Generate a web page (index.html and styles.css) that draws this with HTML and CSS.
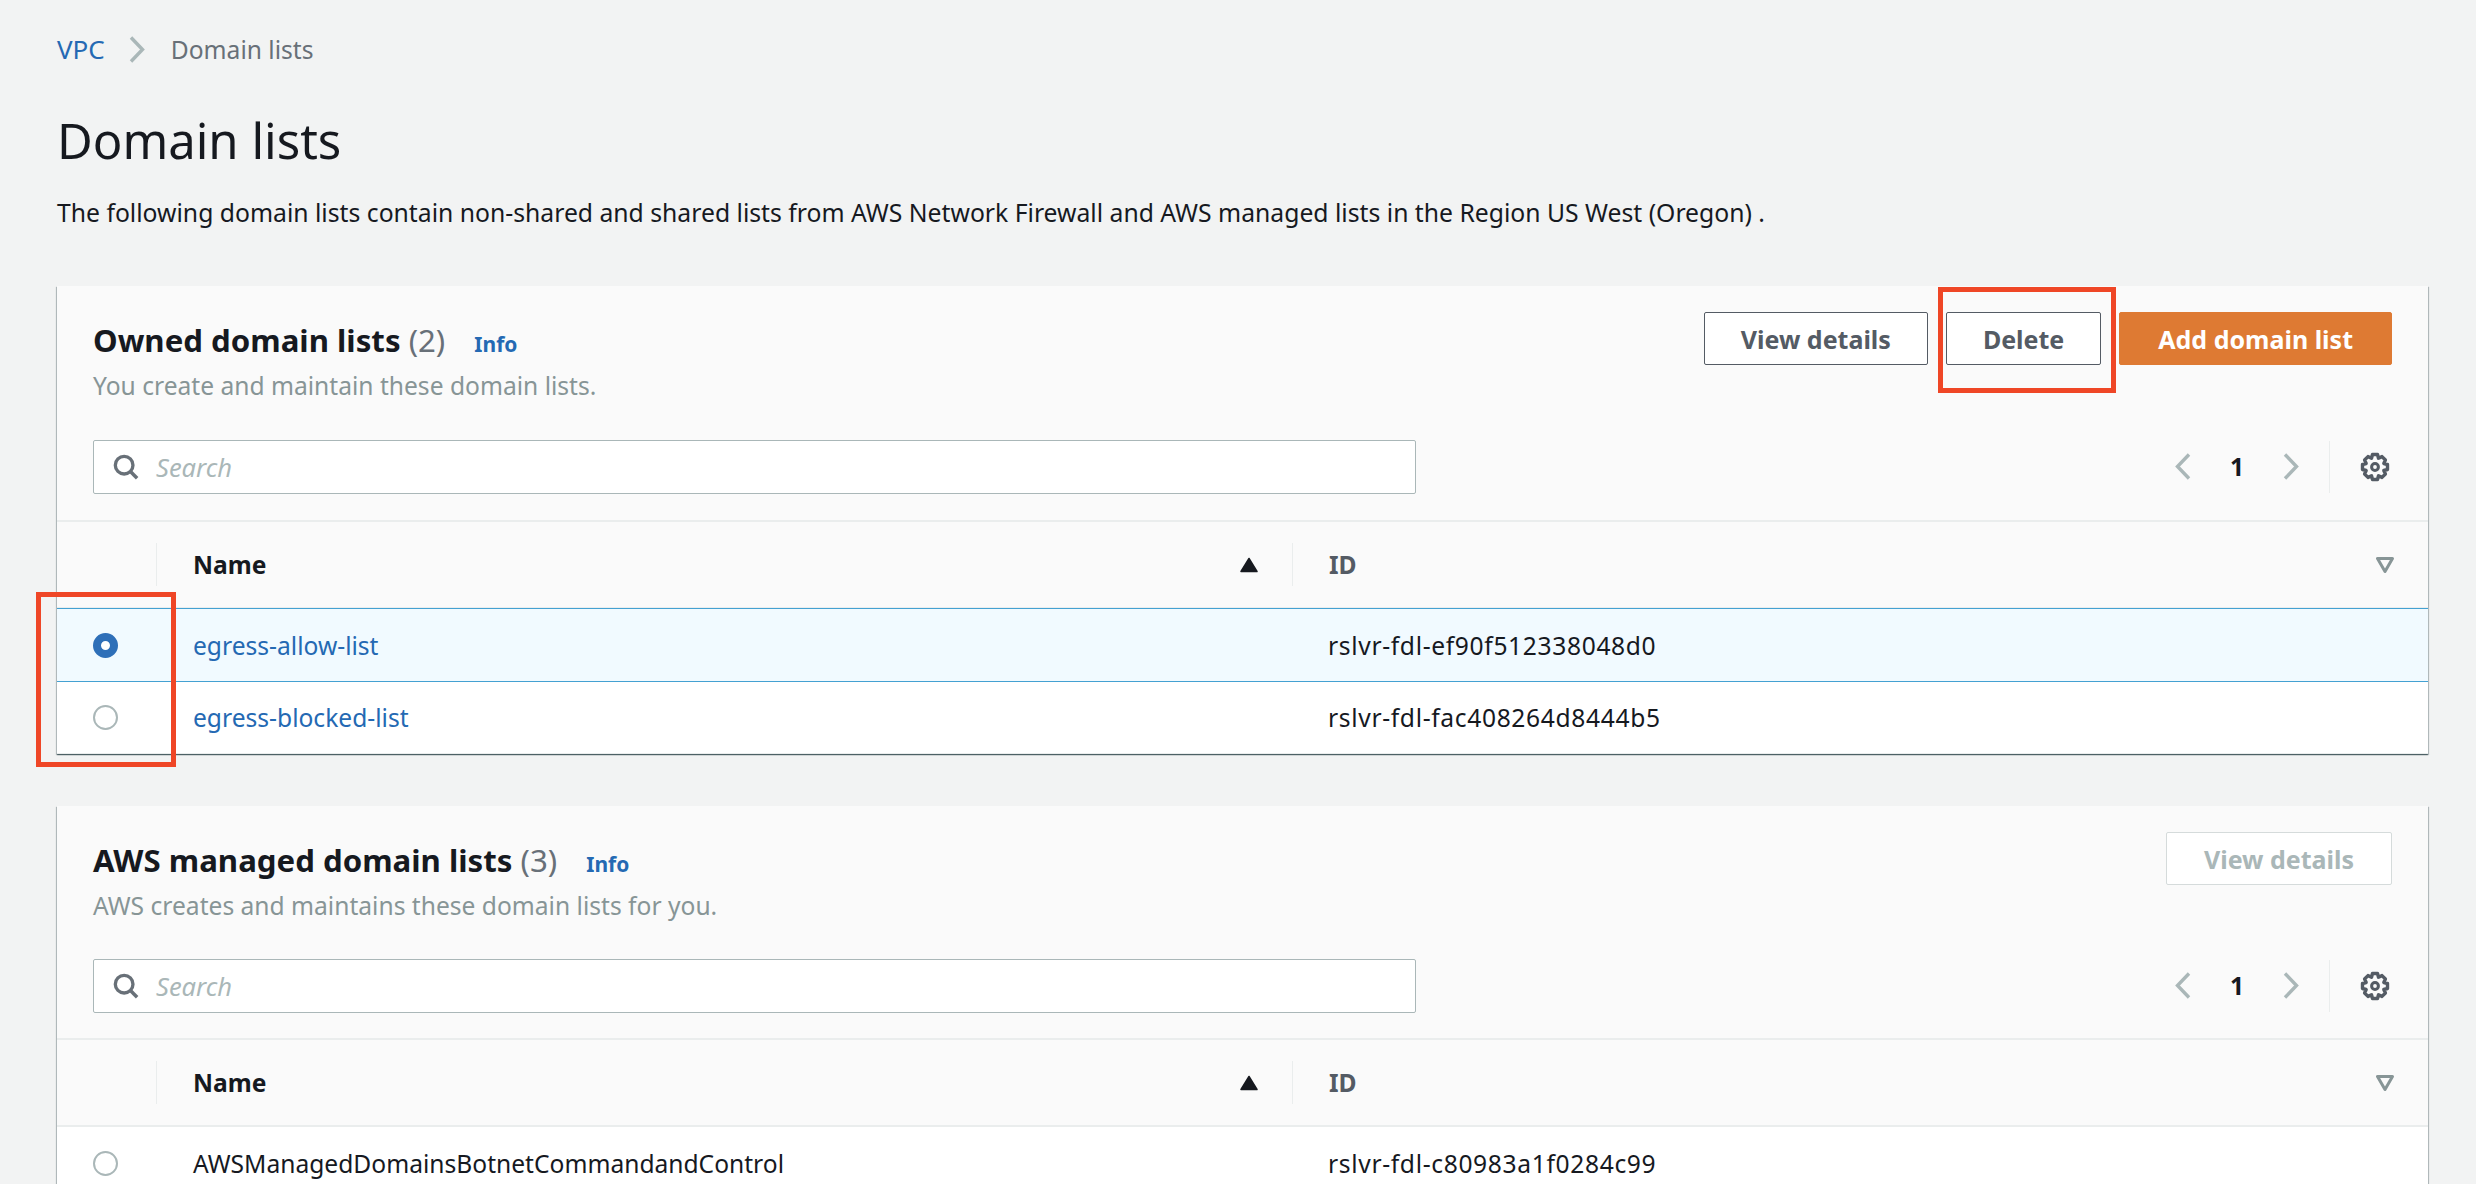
FILE: index.html
```html
<!DOCTYPE html>
<html lang="en">
<head>
    <meta charset="UTF-8">
    <title>Domain lists</title>
    <link rel="stylesheet" href="styles.css">
</head>
<body>
    <svg class="icon-defs" width="0" height="0">
        <symbol id="chevron-right" viewBox="0 0 16 27"><path d="M2 1.5 L13.5 13.5 L2 25.5" fill="none" stroke="currentColor" stroke-width="3.4"/></symbol>
        <symbol id="chevron-left" viewBox="0 0 16 27"><path d="M14 1.5 L2.5 13.5 L14 25.5" fill="none" stroke="currentColor" stroke-width="3.4"/></symbol>
        <symbol id="search" viewBox="0 0 28 28"><circle cx="12" cy="12" r="9.5" fill="none" stroke="currentColor" stroke-width="3.6"/><path d="M18.5 18.5 L26 26" fill="none" stroke="currentColor" stroke-width="3.8"/></symbol>
        <symbol id="gear" viewBox="0 0 30 30"><path d="M12.5 2.5 H17.5 L18.5 6.2 L22 4.6 L25.4 8 L23.8 11.5 L27.5 12.5 V17.5 L23.8 18.5 L25.4 22 L22 25.4 L18.5 23.8 L17.5 27.5 H12.5 L11.5 23.8 L8 25.4 L4.6 22 L6.2 18.5 L2.5 17.5 V12.5 L6.2 11.5 L4.6 8 L8 4.6 L11.5 6.2 Z" fill="none" stroke="currentColor" stroke-width="3.4" stroke-linejoin="round"/><circle cx="15" cy="15" r="3.4" fill="none" stroke="currentColor" stroke-width="3"/></symbol>
        <symbol id="sort-down" viewBox="0 0 18 16"><path d="M1.5 1.5 H16.5 L9 14.5 Z" fill="none" stroke="currentColor" stroke-width="3" stroke-linejoin="round"/></symbol>
        <symbol id="sort-up" viewBox="0 0 18 16"><path d="M9 1.5 L17 14.5 H1 Z" fill="currentColor" stroke="currentColor" stroke-width="1.5" stroke-linejoin="round"/></symbol>
    </svg>

    <div class="page">
        <nav class="crumbs">
            <a href="#">VPC</a>
            <svg class="crumb-sep"><use href="#chevron-right"/></svg>
            <span>Domain lists</span>
        </nav>
        <h1>Domain lists</h1>
        <p class="intro">The following domain lists contain non-shared and shared lists from AWS Network Firewall and AWS managed lists in the Region US West (Oregon) .</p>

        <section class="card">
            <div class="card-head">
                <div>
                    <h2>Owned domain lists <span class="count">(2)</span> <a class="info" href="#">Info</a></h2>
                    <p class="sub">You create and maintain these domain lists.</p>
                </div>
                <div class="actions">
                    <button class="btn btn-view">View details</button>
                    <button class="btn btn-delete">Delete</button>
                    <button class="btn btn-primary">Add domain list</button>
                </div>
            </div>
            <div class="tools">
                <label class="search">
                    <svg class="search-icon"><use href="#search"/></svg>
                    <span>Search</span>
                </label>
                <div class="pager">
                    <svg class="pg-arrow"><use href="#chevron-left"/></svg>
                    <span class="pg-num">1</span>
                    <svg class="pg-arrow"><use href="#chevron-right"/></svg>
                    <span class="pg-sep"></span>
                    <svg class="gear"><use href="#gear"/></svg>
                </div>
            </div>
            <div class="row row-head">
                <div class="cell-radio"><span class="head-sep"></span></div>
                <div class="cell-name"><b>Name</b><svg class="sort sort-active"><use href="#sort-up"/></svg></div>
                <div class="cell-id"><span class="head-sep"></span><b class="id-label">ID</b><svg class="sort"><use href="#sort-down"/></svg></div>
            </div>
            <div class="row row-selected">
                <div class="cell-radio"><span class="radio radio-on"></span></div>
                <div class="cell-name"><a href="#">egress-allow-list</a></div>
                <div class="cell-id"><span class="res-id">rslvr-fdl-ef90f512338048d0</span></div>
            </div>
            <div class="row">
                <div class="cell-radio"><span class="radio"></span></div>
                <div class="cell-name"><a href="#">egress-blocked-list</a></div>
                <div class="cell-id"><span class="res-id">rslvr-fdl-fac408264d8444b5</span></div>
            </div>
            <!-- red annotations from the original screenshot -->
            <div class="mark mark-delete"></div>
            <div class="mark mark-radios"></div>
        </section>

        <section class="card card-managed">
            <div class="card-head">
                <div>
                    <h2>AWS managed domain lists <span class="count">(3)</span> <a class="info" href="#">Info</a></h2>
                    <p class="sub">AWS creates and maintains these domain lists for you.</p>
                </div>
                <div class="actions">
                    <button class="btn btn-view btn-disabled">View details</button>
                </div>
            </div>
            <div class="tools">
                <label class="search">
                    <svg class="search-icon"><use href="#search"/></svg>
                    <span>Search</span>
                </label>
                <div class="pager">
                    <svg class="pg-arrow"><use href="#chevron-left"/></svg>
                    <span class="pg-num">1</span>
                    <svg class="pg-arrow"><use href="#chevron-right"/></svg>
                    <span class="pg-sep"></span>
                    <svg class="gear"><use href="#gear"/></svg>
                </div>
            </div>
            <div class="row row-head">
                <div class="cell-radio"><span class="head-sep"></span></div>
                <div class="cell-name"><b>Name</b><svg class="sort sort-active"><use href="#sort-up"/></svg></div>
                <div class="cell-id"><span class="head-sep"></span><b class="id-label">ID</b><svg class="sort"><use href="#sort-down"/></svg></div>
            </div>
            <div class="row">
                <div class="cell-radio"><span class="radio"></span></div>
                <div class="cell-name">AWSManagedDomainsBotnetCommandandControl</div>
                <div class="cell-id"><span class="res-id">rslvr-fdl-c80983a1f0284c99</span></div>
            </div>
        </section>
    </div>
</body>
</html>
```

FILE: styles.css
```css
html, body {
    margin: 0;
    height: 1184px;
    overflow: hidden;
}
body {
    background: #f2f3f3;
    color: #16191f;
    font-family: "Noto Sans", sans-serif;
    font-size: 24.6px;
}
a {
    color: #2469b3;
    text-decoration: none;
}
.icon-defs {
    position: absolute;
}
.page {
    padding: 0 48px 0 57px;
}
.crumbs {
    display: flex;
    align-items: center;
    height: 28px;
    padding-top: 35px;
}
.crumbs a {
    font-size: 26px;
}
.crumbs span {
    color: #687078;
}
.crumb-sep {
    width: 16px;
    height: 27px;
    margin: 0 26px 0 24px;
    color: #aab7b8;
}
h1 {
    margin: 48px 0 0;
    font-size: 49px;
    font-weight: 400;
    line-height: 58px;
}
.intro {
    margin: 29px 0 0;
    font-size: 24.72px;
    line-height: 30px;
}
.card {
    position: relative;
    margin-top: 58px;
    background: #fafafa;
    box-shadow: 0 1px 1px 0 rgba(0,28,36,.5), 1px 1px 1px 0 rgba(0,28,36,.2), -1px 1px 1px 0 rgba(0,28,36,.2);
}
.card-managed {
    margin-top: 52px;
}
.card-head {
    display: flex;
    justify-content: space-between;
    padding: 26px 36px 0;
    height: 127px;
    box-sizing: border-box;
}
h2 {
    margin: 10px 0 0;
    font-size: 31.2px;
    font-weight: 700;
    line-height: 36px;
}
.count {
    color: #687078;
    font-weight: 400;
}
.info {
    margin-left: 21px;
    font-size: 21px;
    font-weight: 700;
}
.sub {
    margin: 9px 0 0;
    color: #879596;
    line-height: 30px;
}
.actions {
    display: flex;
    gap: 18px;
}
.btn {
    height: 53px;
    padding: 0 36px;
    box-sizing: border-box;
    border: 1px solid #545b64;
    border-radius: 2px;
    background: #fff;
    color: #545b64;
    font-family: inherit;
    font-size: 25px;
    font-weight: 700;
}
.btn-primary {
    padding: 0 38px;
    border-color: #de7a33;
    background: #de7a33;
    color: #fff;
}
.btn-disabled {
    padding: 0 37px;
    border-color: #d5dbdb;
    color: #aab7b8;
}
.tools {
    display: flex;
    justify-content: space-between;
    align-items: center;
    height: 109px;
    padding: 0 36px;
    box-sizing: border-box;
    border-bottom: 2px solid #eaeded;
}
.card-managed .tools {
    height: 107px;
}
.search {
    display: flex;
    align-items: center;
    gap: 17px;
    width: 1323px;
    height: 54px;
    padding-left: 19px;
    box-sizing: border-box;
    border: 1px solid #aab7b8;
    border-radius: 2px;
    background: #fff;
    color: #aab7b8;
    font-size: 25.5px;
    font-style: italic;
}
.search-icon {
    width: 26px;
    height: 28px;
    color: #687078;
}
.pager {
    display: flex;
    align-items: center;
}
.pg-arrow {
    width: 16px;
    height: 27px;
    color: #aab7b8;
}
.pg-num {
    width: 92px;
    font-weight: 700;
    text-align: center;
}
.pg-sep {
    width: 1px;
    height: 52px;
    margin: 0 30px 0 30px;
    background: #eaeded;
}
.gear {
    width: 30px;
    height: 30px;
    margin-right: 2px;
    color: #545b64;
}
.row {
    display: grid;
    grid-template-columns: 136px 1136px 1fr;
    align-items: center;
    height: 73px;
    background: #fff;
    border-bottom: 1px solid #eaeded;
    box-sizing: border-box;
}
.row:last-of-type {
    border-bottom: 0;
}
.row-head {
    height: 87px;
    background: #fafafa;
    border-bottom: 2px solid #eaeded;
}
.row-selected {
    background: #f1faff;
    border-top: 1px solid #44a1d2;
    border-bottom: 1px solid #44a1d2;
    margin-top: -1px;
    height: 74px;
}
.row-selected + .row {
    height: 72px;
}
.cell-radio {
    position: relative;
    height: 100%;
    display: flex;
    align-items: center;
    padding-left: 36px;
}
.cell-name {
    display: flex;
    justify-content: space-between;
    align-items: center;
    padding-right: 71px;
}
.cell-id {
    position: relative;
    display: flex;
    justify-content: space-between;
    align-items: center;
    height: 100%;
    padding-right: 34px;
}
.res-id {
    margin-left: -1px;
    letter-spacing: 0.65px;
}
.head-sep {
    position: absolute;
    top: 21px;
    width: 1px;
    height: 43px;
    background: #eaeded;
}
.cell-radio .head-sep {
    left: 99px;
}
.cell-id .head-sep {
    left: -37px;
}
.id-label {
    color: #545b64;
}
.radio {
    display: block;
    width: 25px;
    height: 25px;
    box-sizing: border-box;
    border: 2px solid #aab7b8;
    border-radius: 50%;
    background: #fff;
}
.radio-on {
    border: 8px solid #2e6fb8;
}
.sort {
    width: 18px;
    height: 16px;
    color: #879596;
}
.sort-active {
    color: #16191f;
}
.mark {
    position: absolute;
    box-sizing: border-box;
    border: 5px solid #ef4626;
}
.mark-delete {
    left: 1881px;
    top: 1px;
    width: 178px;
    height: 106px;
}
.mark-radios {
    left: -21px;
    top: 306px;
    width: 140px;
    height: 175px;
}
```
